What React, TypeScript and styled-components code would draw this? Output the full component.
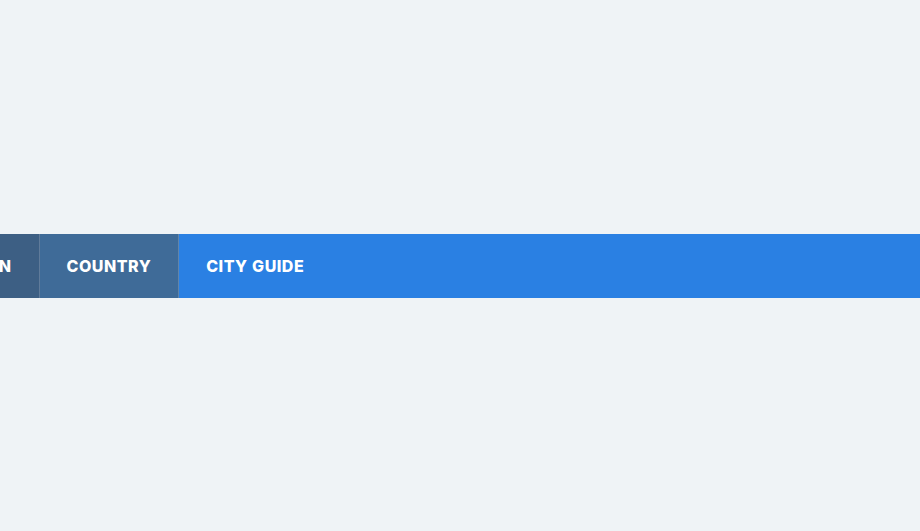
import React from "react";
import styled, { createGlobalStyle } from "styled-components";

const GlobalStyle = createGlobalStyle`
  html, body {
    margin: 0;
    padding: 0;
    background: #eff3f6;
    font-family: Inter, "Noto Sans", "Liberation Sans", sans-serif;
  }
`;

const Page = styled.div`
  height: 100vh;
  display: flex;
  flex-direction: column;
  justify-content: center;
  overflow: hidden;
`;

const Bar = styled.nav`
  height: 64px;
  display: flex;
  background: #2a80e3;
  overflow: hidden;
`;

const Trail = styled.ol`
  display: flex;
  margin: 0 0 0 -80px;
  padding: 0;
  list-style: none;
  flex: 1;
`;

const Crumb = styled.li<{ $tone: string; $last?: boolean }>`
  display: flex;
  align-items: center;
  padding: 0 27px;
  background: ${(p) => p.$tone};
  color: #ffffff;
  font-size: 16px;
  font-weight: 800;
  letter-spacing: 0.5px;
  word-spacing: 0.5px;
  white-space: nowrap;
  border-right: ${(p) => (p.$last ? "none" : "1px solid rgba(255, 255, 255, 0.18)")};
  flex: ${(p) => (p.$last ? 1 : "none")};
`;

const crumbs = [
  { label: "REGION", tone: "#3d5f84" },
  { label: "COUNTRY", tone: "#3f6b98" },
  { label: "CITY GUIDE", tone: "#2a80e3" },
];

export default function App() {
  return (
    <>
      <GlobalStyle />
      <Page>
        <Bar>
          <Trail>
            {crumbs.map((c, i) => (
              <Crumb key={c.label} $tone={c.tone} $last={i === crumbs.length - 1}>
                {c.label}
              </Crumb>
            ))}
          </Trail>
        </Bar>
      </Page>
    </>
  );
}
